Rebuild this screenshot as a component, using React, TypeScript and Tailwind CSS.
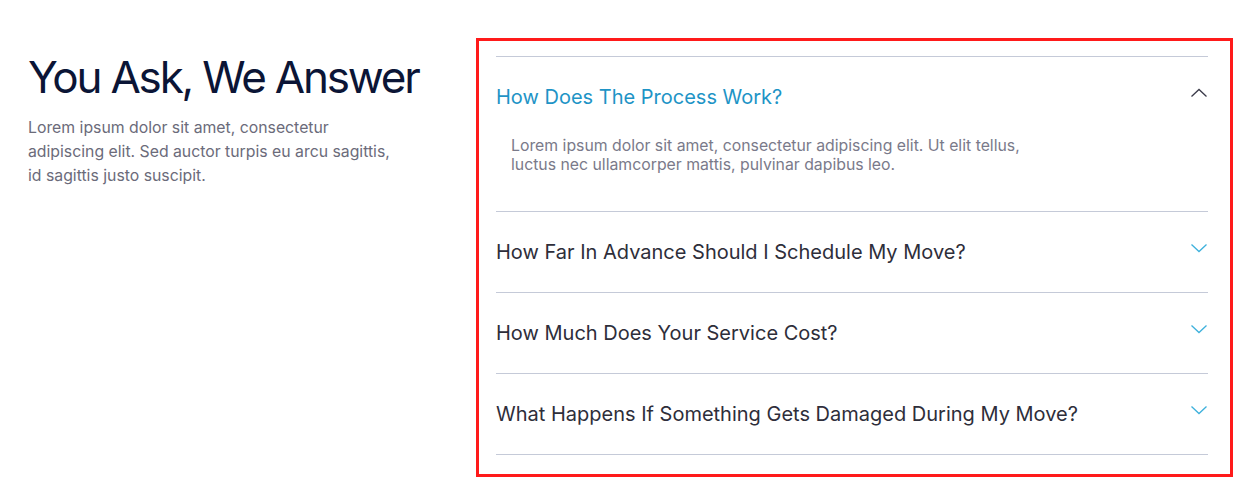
import React, { useState } from "react";

// --- FAQ DATA ---
const FAQS = [
  {
    id: 1,
    question: "How Does The Process Work?",
    answer:
      "Lorem ipsum dolor sit amet, consectetur adipiscing elit. Ut elit tellus, luctus nec ullamcorper mattis, pulvinar dapibus leo.",
  },
  {
    id: 2,
    question: "How Far In Advance Should I Schedule My Move?",
    answer:
      "Lorem ipsum dolor sit amet, consectetur adipiscing elit. Ut elit tellus, luctus nec ullamcorper mattis, pulvinar dapibus leo.",
  },
  {
    id: 3,
    question: "How Much Does Your Service Cost?",
    answer:
      "Lorem ipsum dolor sit amet, consectetur adipiscing elit. Ut elit tellus, luctus nec ullamcorper mattis, pulvinar dapibus leo.",
  },
  {
    id: 4,
    question: "What Happens If Something Gets Damaged During My Move?",
    answer:
      "Lorem ipsum dolor sit amet, consectetur adipiscing elit. Ut elit tellus, luctus nec ullamcorper mattis, pulvinar dapibus leo.",
  },
];

function Chevron({ open }: { open: boolean }) {
  return (
    <svg width="18" height="10" viewBox="0 0 18 10" fill="none" className="shrink-0 -mt-[9px]">
      {open ? (
        <path d="M1.5 8.5 L9 1.5 L16.5 8.5" stroke="#3b3b4a" strokeWidth="1.3" />
      ) : (
        <path d="M1.5 1.5 L9 8.5 L16.5 1.5" stroke="#3eb1dc" strokeWidth="1.3" />
      )}
    </svg>
  );
}

export default function App() {
  const [openId, setOpenId] = useState<number | null>(1);

  return (
    <div
      className="bg-white w-[1242px] h-[491px] flex"
      style={{ fontFamily: "Inter, 'Noto Sans', sans-serif" }}
    >
      {/* Intro column */}
      <div className="w-[476px] shrink-0 pl-[28px] pt-[51px]">
        <h1 className="text-[44px] leading-[1.2] text-[#0b1536] font-normal tracking-[-2.2px]">
          You Ask, We Answer
        </h1>
        <p className="mt-[12px] w-[368px] text-[15.8px] leading-[24px] text-[#6b6b7a]">
          Lorem ipsum dolor sit amet, consectetur adipiscing elit. Sed auctor turpis eu arcu
          sagittis, id sagittis justo suscipit.
        </p>
      </div>

      {/* Accordion (highlighted) */}
      <div className="mt-[38px] w-[757px] h-[439px] border-[3px] border-[#ff1a1a] pt-[15px] pl-[17px] pr-[22px]">
        <div className="border-b border-[#c5cad8]">
          {FAQS.map((faq) => {
            const open = openId === faq.id;
            return (
              <div key={faq.id} className="border-t border-[#c5cad8]">
                <button
                  onClick={() => setOpenId(open ? null : faq.id)}
                  className="w-full h-[80px] flex items-center justify-between text-left"
                >
                  <span
                    className={`text-[20px] leading-[30px] ${
                      open ? "text-[#1e94c6]" : "text-[#2e2e3a]"
                    }`}
                  >
                    {faq.question}
                  </span>
                  <Chevron open={open} />
                </button>
                {open && (
                  <div className="pl-[15px] pb-[37px] -mt-[1px]">
                    <p className="max-w-[540px] text-[15.8px] leading-[19px] text-[#7a7a8a]">
                      {faq.answer}
                    </p>
                  </div>
                )}
              </div>
            );
          })}
        </div>
      </div>
    </div>
  );
}
